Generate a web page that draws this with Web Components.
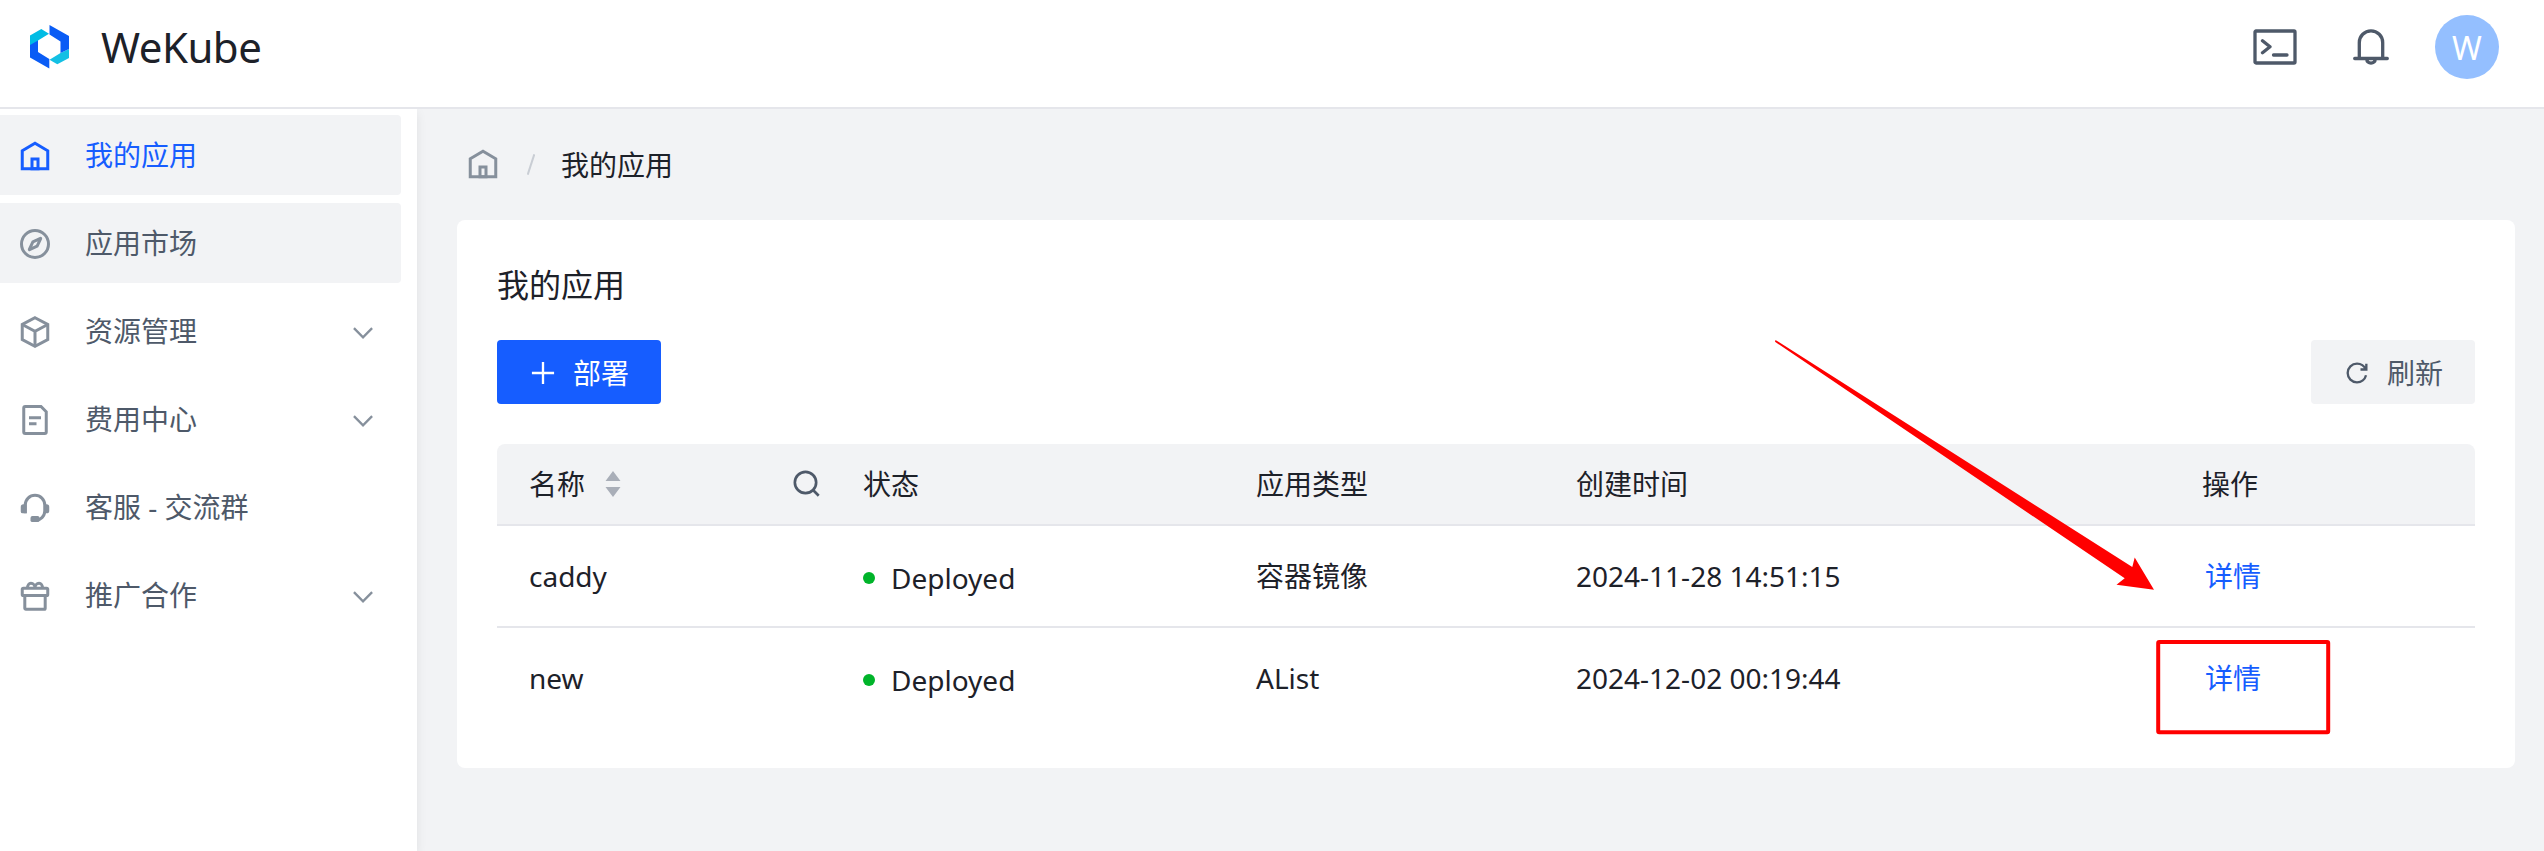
<!DOCTYPE html>
<html lang="zh-CN">
<head>
<meta charset="utf-8">
<title>WeKube</title>
<style>
html, body { margin: 0; height: 100%; overflow: hidden; }
body { font-family: "Noto Sans", "Noto Sans CJK SC", sans-serif; font-size: 28px; line-height: 44px; color: #1d2129; background: #f2f3f5; }
</style>
</head>
<body>
<wk-app></wk-app>
<script>
const define = (name, html, setup) => {
  const tpl = document.createElement('template');
  tpl.innerHTML = html;
  customElements.define(name, class extends HTMLElement {
    constructor() {
      super();
      this.attachShadow({ mode: 'open' }).append(tpl.content.cloneNode(true));
    }
    connectedCallback() { if (setup) setup(this, this.shadowRoot); }
  });
};

const ICONS = {
  home: '<path d="M7 17 24 7l17 10v24H7V17Z"/><path d="M20 28h8v13h-8V28Z"/>',
  compass: '<circle cx="24" cy="24" r="18"/><path d="m21.177 21.183 10.108-4.717a.2.2 0 0 1 .266.265L26.834 26.84l-10.109 4.717a.2.2 0 0 1-.266-.266l4.718-10.108Z"/>',
  cube: '<path d="M24 5 41 14v20L24 43 7 34V14Z"/><path d="m7 14 17 9 17-9M24 23v20"/>',
  file: '<path d="M16 21h16m-16 8h10m11 13H11a2 2 0 0 1-2-2V8a2 2 0 0 1 2-2h21l7 7v27a2 2 0 0 1-2 2Z"/>',
  service: '<path d="M11 31V20c0-7.18 5.82-13 13-13s13 5.82 13 13v8c0 7.18-5.82 12-12 12.500"/><path d="M13 19H8.500a3.500 3.500 0 0 0-3.500 3.500V28.500A2.500 2.500 0 0 0 7.500 31H13ZM36 19h3.500a3.500 3.500 0 0 1 3.500 3.500v5a3.500 3.500 0 0 1-3.500 3.500H36Z" fill="currentColor" stroke="none"/><rect x="18" y="34.700" width="12" height="8" rx="2.500" fill="currentColor" stroke="none"/>',
  gift: '<rect x="7" y="13.600" width="34" height="9.800" rx="1.500"/><path d="M10.400 23.400v17a1.400 1.400 0 0 0 1.400 1.400h24.400a1.400 1.400 0 0 0 1.400-1.400v-17M14 13.600c0-4 2-6.600 4.600-6.600 3 0 5.400 3 5.400 6.600 0-3.600 2.400-6.600 5.400-6.600 2.600 0 4.600 2.600 4.600 6.600"/>',
  down: '<path d="M39.600 17.443 24.043 33 8.487 17.443"/>',
  plus: '<path d="M5 24h38M24 5v38"/>',
  refresh: '<path d="M38.837 18C36.463 12.136 30.715 8 24 8 15.163 8 8 15.163 8 24s7.163 16 16 16c7.455 0 13.720-5.100 15.496-12M40 8v10H30"/>',
  search: '<path d="M33.072 33.071c6.248-6.248 6.248-16.379 0-22.627-6.249-6.249-16.380-6.249-22.628 0-6.248 6.248-6.248 16.379 0 22.627 6.248 6.248 16.380 6.248 22.628 0Zm0 0 8.485 8.485"/>'
};

define('wk-icon', `<style>
  :host { display: block; flex: none; width: 36px; height: 36px; }
  svg { display: block; width: 100%; height: 100%; fill: none; stroke: currentColor; stroke-width: 4; }
</style><svg viewBox="0 0 48 48"></svg>`, (el, root) => {
  root.querySelector('svg').innerHTML = ICONS[el.getAttribute('name')] || '';
});

define('wk-header', `<style>
  :host { display: flex; align-items: flex-start; justify-content: space-between; box-sizing: border-box; height: 109px; border-bottom: 2px solid #e5e6eb; background: #fff; padding: 15px 45px 0 30px; }
  .brand { display: flex; align-items: center; gap: 32px; height: 64px; }
  .logo { display: block; width: 39px; height: 44px; }
  h1 { margin: -1px 0 0; font-size: 42px; line-height: 64px; font-weight: 400; letter-spacing: -.5px; }
  .tools { display: flex; align-items: center; height: 64px; color: #4e5969; }
  .tools svg { display: block; fill: none; stroke: currentColor; stroke-width: 3.300; stroke-linecap: round; stroke-linejoin: round; }
  .term { width: 44px; height: 36px; margin-right: 56px; }
  .bell { width: 36px; height: 38px; margin-right: 46px; }
  .avatar { width: 64px; height: 64px; border-radius: 50%; background: #94bfff; color: #fff; font-size: 32px; line-height: 65px; text-align: center; }
</style>
<div class="brand">
  <svg class="logo" viewBox="0 0 39 44">
    <path d="M0 10.500 11.300 4 19 8.800 8 15.500V17L0 21Z" fill="#00bce4"/>
    <path d="M0 20 8 15.500V27l11.300 7v9.500L0 32.500Z" fill="#0a5cf5"/>
    <path d="M39 24v9l-11.700 6.300-7.800-4.500L30.500 28Z" fill="#14c0e4"/>
    <path d="M19.500 0 39 11V24l-8.500 4V16.500L19.500 9.500Z" fill="#0a5cf5"/>
  </svg>
  <h1>WeKube</h1>
</div>
<div class="tools">
  <svg class="term" viewBox="0 0 44 36"><rect x="2" y="2" width="40" height="32" rx="1"/><path d="m9.500 11.800 7.500 6-7.500 6M20.500 26H34"/></svg>
  <svg class="bell" viewBox="0 0 36 38"><path d="M6.300 30.500V14.500a11.700 11.700 0 0 1 23.400 0v16M1.700 30.500h32.600M13.800 31.500a4.200 3.700 0 0 0 8.400 0"/></svg>
  <div class="avatar">W</div>
</div>`);

define('wk-menu-item', `<style>
  :host { display: flex; align-items: center; box-sizing: border-box; width: 401px; height: 80px; padding: 0 24px 0 17px; border-radius: 0 4px 4px 0; color: #4e5969; }
  :host([filled]) { background: #f2f3f5; }
  :host([active]) { color: #165dff; }
  .label { flex: 1; margin-left: 32px; }
  wk-icon { color: #86909c; margin-top: 2px; }
  :host([active]) wk-icon { color: #165dff; }
  .arrow { width: 28px; height: 28px; }
  :host(:not([expandable])) .arrow { display: none; }
</style><wk-icon class="lead"></wk-icon><span class="label"><slot></slot></span><wk-icon class="arrow" name="down"></wk-icon>`, (el, root) => {
  const lead = root.querySelector('.lead');
  lead.setAttribute('name', el.getAttribute('icon'));
  lead.shadowRoot.querySelector('svg').innerHTML = ICONS[el.getAttribute('icon')];
});

define('wk-sidebar', `<style>
  :host { display: flex; flex-direction: column; gap: 8px; box-sizing: border-box; flex: none; width: 417px; padding-top: 6px; background: #fff; box-shadow: 0 4px 10px rgba(0,0,0,.08); clip-path: inset(0 -20px 0 0); }
</style>
<wk-menu-item icon="home" active filled>我的应用</wk-menu-item>
<wk-menu-item icon="compass" filled>应用市场</wk-menu-item>
<wk-menu-item icon="cube" expandable>资源管理</wk-menu-item>
<wk-menu-item icon="file" expandable>费用中心</wk-menu-item>
<wk-menu-item icon="service">客服 - 交流群</wk-menu-item>
<wk-menu-item icon="gift" expandable>推广合作</wk-menu-item>`);

define('wk-breadcrumb', `<style>
  :host { display: flex; align-items: center; height: 48px; padding-left: 8px; }
  wk-icon { color: #86909c; margin-top: -1px; }
  svg { display: block; width: 8px; height: 21px; margin: 1px 26px 0 26px; stroke: #c9cdd4; stroke-width: 2; fill: none; }
  span { padding-top: 1px; }
</style><wk-icon name="home"></wk-icon><svg viewBox="0 0 8 21"><path d="M7.300.300.700 20.700"/></svg><span><slot></slot></span>`);

define('wk-button', `<style>
  :host { display: flex; align-items: center; box-sizing: border-box; width: 164px; height: 64px; padding-left: 32px; gap: 16px; border-radius: 4px; background: #f2f3f5; color: #4e5969; }
  :host([primary]) { background: #165dff; color: #fff; }
  ::slotted(wk-icon) { width: 28px; height: 28px; margin-top: 2px; }
  span { padding-top: 2px; }
</style><slot name="icon"></slot><span><slot></slot></span>`);

define('wk-status', `<style>
  :host { display: flex; align-items: center; gap: 16px; padding-top: 4px; }
  i { width: 12px; height: 12px; border-radius: 50%; background: #00b42a; }
</style><i></i><span><slot></slot></span>`);

define('wk-row', `<style>
  :host { display: grid; grid-template-columns: 334px 393px 320px 626px 1fr; align-items: center; box-sizing: border-box; height: 102px; border-bottom: 2px solid #e5e6eb; }
  :host([head]) { height: 82px; background: #f2f3f5; border-radius: 8px 8px 0 0; }
  :host([last]) { height: 100px; border-bottom: none; }
  ::slotted(*) { padding-left: 32px; }
</style><slot></slot>`);

define('wk-sort-head', `<style>
  :host { display: flex; align-items: center; padding-right: 8px; }
  svg { display: block; width: 16px; height: 26px; margin-left: 20px; fill: #a9aeb8; }
  wk-icon { width: 32px; height: 32px; margin-left: auto; color: #4e5969; }
</style><span><slot></slot></span><svg viewBox="0 0 16 26"><path d="M8 0l7.500 10H.500ZM8 26l7.500-10H.500Z"/></svg><wk-icon name="search"></wk-icon>`);

define('wk-link', `<style>
  :host { display: block; }
  a { color: #165dff; padding: 0 3px; }
</style><a><slot></slot></a>`);

define('wk-card', `<style>
  :host { display: block; box-sizing: border-box; height: 548px; padding: 40px; border-radius: 8px; background: #fff; }
  h2 { margin: 0; font-size: 32px; line-height: 50px; height: 50px; font-weight: 400; }
  .bar { display: flex; justify-content: space-between; margin: 30px 0 40px; }
</style>
<h2>我的应用</h2>
<div class="bar">
  <wk-button primary><wk-icon slot="icon" name="plus"></wk-icon>部署</wk-button>
  <wk-button><wk-icon slot="icon" name="refresh"></wk-icon>刷新</wk-button>
</div>
<wk-row head><wk-sort-head>名称</wk-sort-head><span>状态</span><span>应用类型</span><span>创建时间</span><span>操作</span></wk-row>
<wk-row><span>caddy</span><wk-status>Deployed</wk-status><span>容器镜像</span><span>2024-11-28 14:51:15</span><wk-link>详情</wk-link></wk-row>
<wk-row last><span>new</span><wk-status>Deployed</wk-status><span>AList</span><span>2024-12-02 00:19:44</span><wk-link>详情</wk-link></wk-row>`);

/* Red arrow and frame drawn over the page to point at the details link. */
define('wk-callout', `<style>
  :host { position: absolute; left: 1774px; top: 339px; width: 560px; height: 400px; pointer-events: none; }
  svg { display: block; }
</style><svg width="560" height="400" viewBox="1774 339 560 400">
  <path d="M1775.500 340 2132.300 567 2134.700 557.500 2154 589.700 2116.500 584.700 2124.700 578.300 1775 341.800Z" fill="#f00"/>
  <rect x="2158.200" y="642" width="170" height="90.300" rx="1" fill="none" stroke="#f00" stroke-width="4"/>
</svg>`);

define('wk-app', `<style>
  :host { display: flex; flex-direction: column; position: relative; height: 851px; }
  .body { display: flex; flex: 1; }
  main { flex: 1; padding: 31px 29px 0 40px; }
  wk-breadcrumb { margin-bottom: 32px; }
</style>
<wk-header></wk-header>
<div class="body">
  <wk-sidebar></wk-sidebar>
  <main><wk-breadcrumb>我的应用</wk-breadcrumb><wk-card></wk-card></main>
</div>
<wk-callout></wk-callout>`);
</script>
</body>
</html>
